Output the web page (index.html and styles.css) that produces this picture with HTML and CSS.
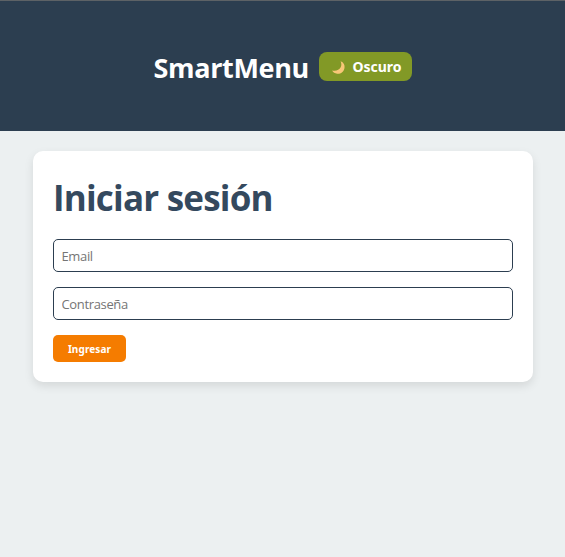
FILE: index.html
```html
<!DOCTYPE html>
<html lang="es">
<head>
<meta charset="utf-8">
<title>SmartMenu</title>
<link rel="stylesheet" href="styles.css">
</head>
<body>
<header class="header">
  <h1 class="brand">SmartMenu</h1>
  <button class="theme-toggle" type="button">
    <svg class="moon" viewBox="0 0 16 16" aria-hidden="true"><path d="M10.2 1.2C13.5 2.3 15 5.2 14.4 8.4C13.7 12.5 10.3 15 6.5 14.6C4.1 14.4 2.2 13.1 1.2 11.2C5 12.2 8.7 11 10.3 7.8C11.4 5.6 11.2 3.2 10.2 1.2Z"/></svg>
    <span>Oscuro</span>
  </button>
</header>
<main class="card">
  <h2 class="title">Iniciar sesión</h2>
  <form class="form">
    <input class="field" type="email" placeholder="Email">
    <input class="field" type="password" placeholder="Contraseña">
    <button class="submit" type="button">Ingresar</button>
  </form>
</main>
</body>
</html>
```
FILE: styles.css
```css
* { box-sizing: border-box; }
body { margin: 0; min-height: 100vh; background: #ecf0f1; font-family: "Open Sans", sans-serif; }
.header {
  height: 131px;
  padding-top: 4px;
  display: flex;
  justify-content: center;
  align-items: center;
  gap: 10px;
  background: #2c3e50;
  border-top: 1px solid #5d6266;
}
.brand { width: 155px; margin: 0; font-size: 27px; line-height: 36px; font-weight: 700; letter-spacing: -.35px; color: #fff; white-space: nowrap; }
.theme-toggle {
  width: 93px;
  height: 29px;
  margin-bottom: 4px;
  padding: 0 0 0 3px;
  display: flex;
  align-items: center;
  justify-content: center;
  gap: 6px;
  border: 0;
  border-radius: 8px;
  background: #829926;
  color: #fff;
  font: 700 14px "Noto Sans", sans-serif;
}
.moon { width: 15px; height: 15px; margin-top: 2px; fill: #f7c777; }
.card {
  width: 500px;
  height: 231px;
  margin: 20px auto 0;
  padding: 20px;
  position: relative;
  left: .5px;
  border-radius: 10px;
  background: #fff;
  box-shadow: 0 4px 10px rgba(0, 0, 0, .1);
}
.title { margin: 0 0 15px; padding-top: 1px; font-size: 35px; line-height: 52px; font-weight: 700; letter-spacing: -.8px; color: #34495e; }
.form { display: flex; flex-direction: column; align-items: flex-start; }
.field {
  width: 100%;
  height: 33px;
  margin: 0 0 15px;
  padding: 0 8px 0 7.5px;
  border: 1px solid #2c3e50;
  border-radius: 5px;
  font: 13px "Open Sans", sans-serif;
  letter-spacing: -.35px;
}
.field::placeholder { color: #757575; }
.submit {
  width: 73px;
  height: 27px;
  padding: 0;
  border: 0;
  border-radius: 5px;
  background: #f57c00;
  color: #fff;
  font: 700 10px "Noto Sans", sans-serif;
  letter-spacing: .1px;
}
```
